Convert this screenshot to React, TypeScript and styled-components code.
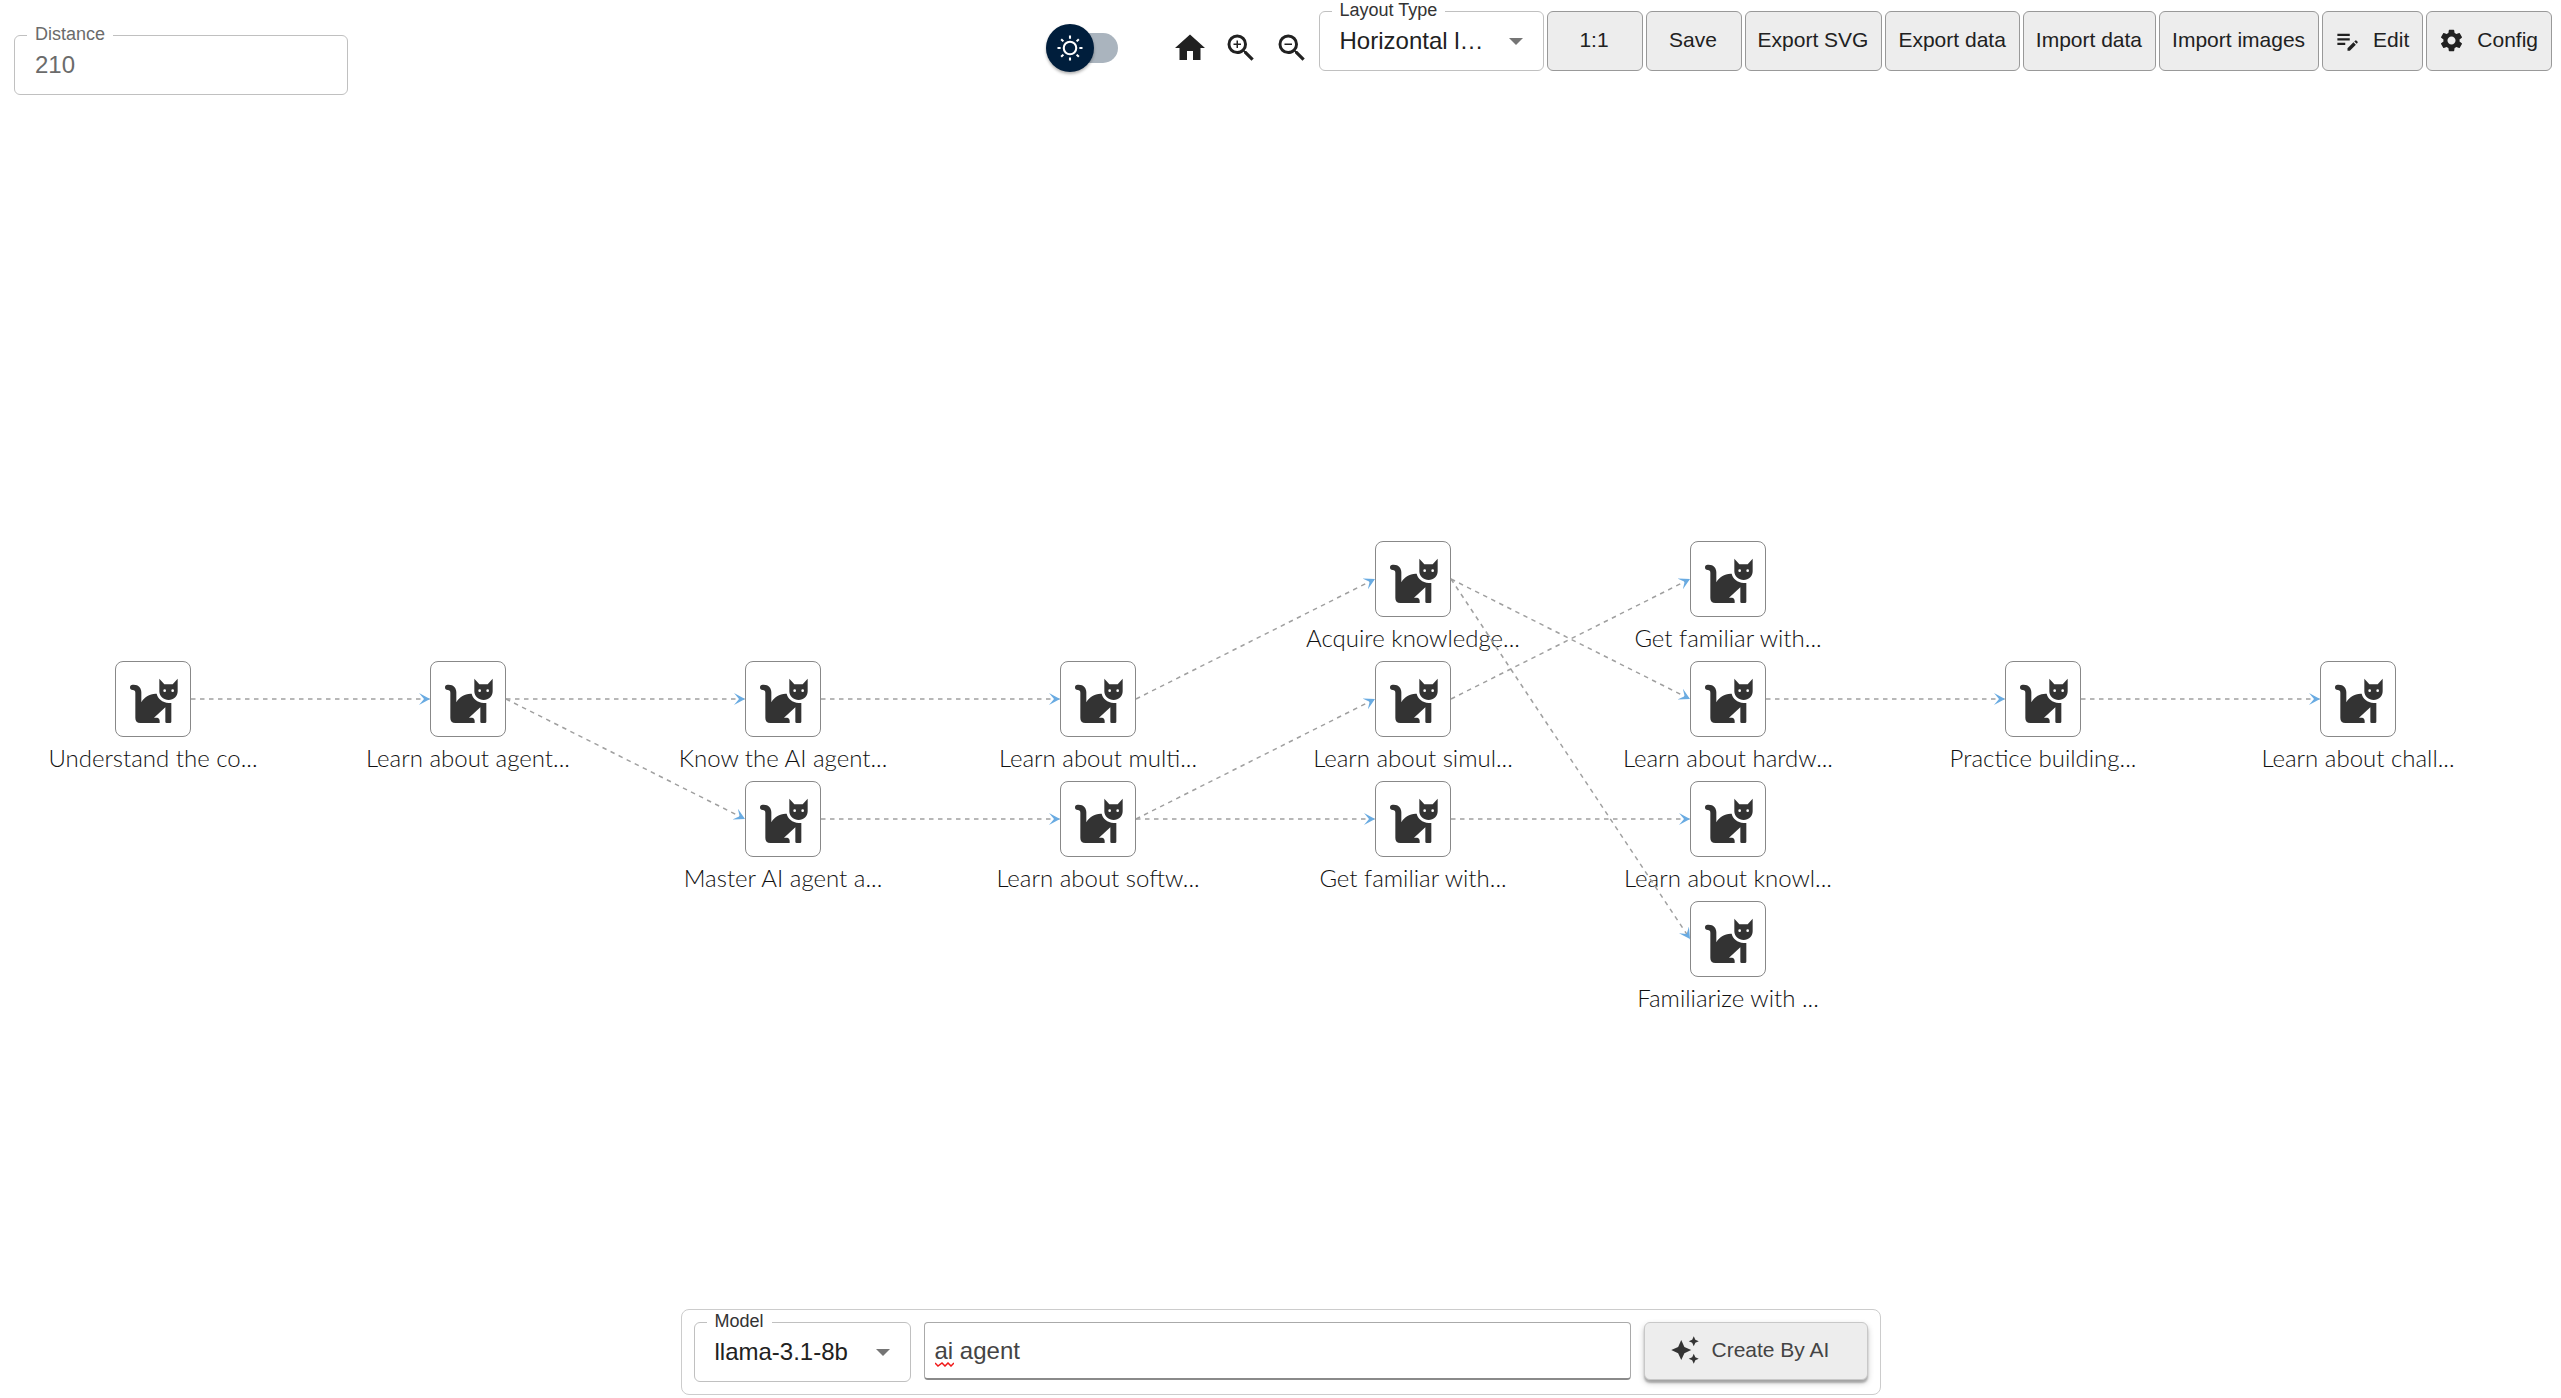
import React, { useState } from 'react';
import styled, { createGlobalStyle } from 'styled-components';
import {
  MdAutoAwesome,
  MdEditNote,
  MdHome,
  MdSettings,
  MdZoomIn,
  MdZoomOut,
} from 'react-icons/md';

const GlobalStyle = createGlobalStyle`
  *, *::before, *::after { box-sizing: border-box; }
  body {
    margin: 0;
    background: #fff;
    color: #212121;
    font-family: 'Liberation Sans', Arial, sans-serif;
  }
  button, input, select { font: inherit; color: inherit; }
`;

const Page = styled.div`
  display: flex;
  flex-direction: column;
  min-height: 100vh;
  overflow: hidden;
`;

const Header = styled.header`
  display: flex;
  justify-content: space-between;
  align-items: flex-start;
  padding: 11px 9px 0 14px;
`;

const DistanceSlot = styled.div`
  padding-top: 24px;
`;

const Toolbar = styled.div`
  display: flex;
  align-items: flex-start;
  gap: 3px;
`;

const ViewTools = styled.div`
  display: flex;
  align-items: center;
  gap: 15px;
  height: 48px;
  margin: 13px 6px 0 0;
`;

const Field = styled.div<{ $width: number }>`
  position: relative;
  flex: none;
  width: ${(p) => p.$width}px;
  height: 60px;
  border: 1px solid #c0c0c0;
  border-radius: 6px;
`;

const FieldLabel = styled.label<{ $muted?: boolean }>`
  position: absolute;
  top: -12px;
  left: 12px;
  padding: 0 8px;
  background: #fff;
  font-size: 18px;
  line-height: 20px;
  white-space: nowrap;
  color: ${(p) => (p.$muted ? '#6b6b6b' : '#333')};
`;

const FieldInput = styled.input`
  width: 100%;
  height: 100%;
  padding: 0 20px;
  border: 0;
  border-radius: 6px;
  outline: 0;
  background: transparent;
  font-size: 24px;
  color: #6b6b6b;
`;

const FieldSelect = styled.select`
  width: 100%;
  height: 100%;
  padding: 0 48px 2px 20px;
  border: 0;
  border-radius: 6px;
  outline: 0;
  appearance: none;
  background: transparent;
  font-size: 24px;
`;

const Caret = styled.svg`
  position: absolute;
  top: 26px;
  right: 20px;
  width: 14px;
  height: 7px;
  fill: #757575;
  pointer-events: none;
`;

const Switch = styled.label`
  position: relative;
  display: block;
  width: 72px;
  height: 30px;
  margin-right: 39px;
  border-radius: 15px;
  background: #aab4be;
  cursor: pointer;
`;

const SwitchInput = styled.input`
  position: absolute;
  inset: 0;
  width: 100%;
  height: 100%;
  margin: 0;
  opacity: 0;
  cursor: pointer;
`;

const Thumb = styled.span<{ $on: boolean }>`
  position: absolute;
  top: -9px;
  left: ${(p) => (p.$on ? 24 : 0)}px;
  display: grid;
  place-items: center;
  width: 48px;
  height: 48px;
  border-radius: 50%;
  background: #001e3c;
  box-shadow: 0 2px 3px rgba(0, 0, 0, 0.3);
  pointer-events: none;
`;

const IconButton = styled.button`
  display: block;
  padding: 0;
  border: 0;
  background: none;
  font-size: 36px;
  line-height: 0;
  cursor: pointer;
`;

const ToolButton = styled.button`
  display: flex;
  align-items: center;
  justify-content: center;
  gap: 12px;
  min-width: 96px;
  height: 60px;
  padding: 0 13px 2px 12px;
  border: 1px solid #999;
  border-radius: 6px;
  background: #ededed;
  font-size: 21px;
  white-space: nowrap;
  cursor: pointer;

  svg {
    margin-left: -1px;
    font-size: 27px;
  }
`;

const Canvas = styled.main`
  position: relative;
  flex: 1;
`;

const Edges = styled.svg`
  position: absolute;
  inset: 0;
  width: 100%;
  height: 100%;
  overflow: visible;
`;

const Node = styled.div<{ $x: number; $y: number }>`
  position: absolute;
  left: ${(p) => p.$x - 150}px;
  top: ${(p) => p.$y - 38}px;
  width: 300px;
  display: flex;
  flex-direction: column;
  align-items: center;
  gap: 6px;
`;

const NodeBox = styled.div`
  display: grid;
  place-items: center;
  width: 76px;
  height: 76px;
  padding: 4px 0 0 2px;
  border: 1px solid #888;
  border-radius: 8px;
  background: #fff;
`;

const NodeLabel = styled.span`
  font-family: Lato, 'Open Sans', sans-serif;
  font-weight: 300;
  font-size: 24px;
  line-height: 30px;
  white-space: nowrap;
  color: #111;
`;

const PromptBar = styled.form`
  display: flex;
  align-items: flex-start;
  gap: 13px;
  width: 1200px;
  max-width: 100%;
  margin: 0 auto 3px;
  padding: 12px;
  border: 1px solid #ccc;
  border-radius: 8px;
`;

const PromptBox = styled.div`
  position: relative;
  flex: 1;
`;

const PromptInput = styled.input`
  display: block;
  width: 100%;
  height: 58px;
  padding: 0 10px;
  border: 1px solid #aaa;
  border-bottom: 2px solid #8a8a8a;
  border-radius: 4px;
  outline: 0;
  background: #fff;
  font-size: 24px;
  color: #444;
`;

const Squiggle = styled.svg`
  position: absolute;
  left: 11px;
  bottom: 13px;
  width: 19px;
  height: 5px;
  fill: none;
  stroke: #f01818;
  stroke-width: 1.5;
  pointer-events: none;
`;

const CreateButton = styled.button`
  display: flex;
  align-items: center;
  gap: 12px;
  min-width: 224px;
  height: 58px;
  padding: 0 25px 2px;
  border: 1px solid #c8c8c8;
  border-radius: 6px;
  background: #ededed;
  box-shadow: 0 3px 2px rgba(0, 0, 0, 0.24), 0 3px 6px rgba(0, 0, 0, 0.2);
  font-size: 21px;
  white-space: nowrap;
  color: #444;
  cursor: pointer;

  svg {
    font-size: 30px;
    color: #333;
  }
`;

const COLUMN_GAP = 315;
const ROW_GAP = 120;
const HALF = 38;
const nodeX = (col: number) => 153 + col * COLUMN_GAP;
const nodeY = (row: number) => 484 + row * ROW_GAP;

type GraphNode = { id: string; col: number; row: number; label: string };

const NODES: GraphNode[] = [
  { id: 'concept', col: 0, row: 1, label: 'Understand the co...' },
  { id: 'agents', col: 1, row: 1, label: 'Learn about agent...' },
  { id: 'know', col: 2, row: 1, label: 'Know the AI agent...' },
  { id: 'master', col: 2, row: 2, label: 'Master AI agent a...' },
  { id: 'multi', col: 3, row: 1, label: 'Learn about multi...' },
  { id: 'software', col: 3, row: 2, label: 'Learn about softw...' },
  { id: 'acquire', col: 4, row: 0, label: 'Acquire knowledge...' },
  { id: 'simulation', col: 4, row: 1, label: 'Learn about simul...' },
  { id: 'familiar', col: 4, row: 2, label: 'Get familiar with...' },
  { id: 'familiarTop', col: 5, row: 0, label: 'Get familiar with...' },
  { id: 'hardware', col: 5, row: 1, label: 'Learn about hardw...' },
  { id: 'knowledge', col: 5, row: 2, label: 'Learn about knowl...' },
  { id: 'familiarize', col: 5, row: 3, label: 'Familiarize with ...' },
  { id: 'practice', col: 6, row: 1, label: 'Practice building...' },
  { id: 'challenges', col: 7, row: 1, label: 'Learn about chall...' },
];

const EDGES: [string, string][] = [
  ['concept', 'agents'],
  ['agents', 'know'],
  ['agents', 'master'],
  ['know', 'multi'],
  ['master', 'software'],
  ['multi', 'acquire'],
  ['software', 'simulation'],
  ['software', 'familiar'],
  ['acquire', 'hardware'],
  ['acquire', 'familiarize'],
  ['simulation', 'familiarTop'],
  ['familiar', 'knowledge'],
  ['hardware', 'practice'],
  ['practice', 'challenges'],
];

const byId = new Map(NODES.map((n) => [n.id, n]));

const CatIcon = () => (
  <svg width="48" height="48" viewBox="90 81 144 144" fill="#333" aria-hidden="true">
    <path d="M98 104h3c15 0 23 10 23 23v30c8-15 24-26 43-26h3c3 15 17 26 36 28h8v56q0 4-4 4h-10q-4 0-4-4v-43l-34 31h10q7 2 7 9v7h-58q-15 0-15-15v-76q0-8-8-8a8 8 0 0 1 0-16z" />
    <path
      fillRule="evenodd"
      d="M178 86l15 17h25l15-17v38c0 15-12 26-27 26s-28-11-28-26zM194 118a4 4 0 1 0 0 8 4 4 0 0 0 0-8zM218 118a4 4 0 1 0 0 8 4 4 0 0 0 0-8z"
    />
  </svg>
);

const SunIcon = () => (
  <svg width="30" height="30" viewBox="0 0 20 20" fill="#fff" aria-hidden="true">
    <path d="M9.305 1.667V3.75h1.389V1.667h-1.39zm-4.707 1.95l-.982.982L5.09 6.072l.982-.982-1.473-1.473zm10.802 0L13.927 5.09l.982.982 1.473-1.473-.982-.982zM10 5.139a4.872 4.872 0 00-4.862 4.86A4.872 4.872 0 0010 14.862 4.872 4.872 0 0014.86 10 4.872 4.872 0 0010 5.139zm0 1.389A3.462 3.462 0 0113.471 10a3.462 3.462 0 01-3.473 3.472A3.462 3.462 0 016.527 10 3.462 3.462 0 0110 6.528zM1.665 9.305v1.39h2.083v-1.39H1.666zm14.583 0v1.39h2.084v-1.39h-2.084zM5.09 13.928L3.616 15.4l.982.982 1.473-1.473-.982-.982zm9.82 0l-.982.982 1.473 1.473.982-.982-1.473-1.473zM9.305 16.25v2.083h1.389V16.25h-1.39z" />
  </svg>
);

const CaretIcon = () => (
  <Caret viewBox="0 0 14 7" aria-hidden="true">
    <path d="M0 0h14L7 7z" />
  </Caret>
);

const Graph = () => (
  <Canvas>
    {NODES.map((n) => (
      <Node key={n.id} $x={nodeX(n.col)} $y={nodeY(n.row)}>
        <NodeBox>
          <CatIcon />
        </NodeBox>
        <NodeLabel>{n.label}</NodeLabel>
      </Node>
    ))}
    <Edges aria-hidden="true">
      <defs>
        <marker
          id="arrow"
          markerUnits="userSpaceOnUse"
          markerWidth="12"
          markerHeight="12"
          refX="11"
          refY="6"
          orient="auto"
        >
          <path d="M0 0l11 6-11 6 5-6z" fill="#69abe2" />
        </marker>
      </defs>
      {EDGES.map(([from, to]) => {
        const a = byId.get(from)!;
        const b = byId.get(to)!;
        return (
          <line
            key={`${from}-${to}`}
            x1={nodeX(a.col) + HALF}
            y1={nodeY(a.row)}
            x2={nodeX(b.col) - HALF}
            y2={nodeY(b.row)}
            stroke="#a0a0a0"
            strokeWidth="1.5"
            strokeDasharray="4.5 4.5"
            markerEnd="url(#arrow)"
          />
        );
      })}
    </Edges>
  </Canvas>
);

export default function App() {
  const [dark, setDark] = useState(false);
  const [distance, setDistance] = useState('210');
  const [prompt, setPrompt] = useState('ai agent');

  return (
    <Page>
      <GlobalStyle />
      <Header>
        <DistanceSlot>
          <Field $width={334}>
            <FieldLabel htmlFor="distance" $muted>
              Distance
            </FieldLabel>
            <FieldInput
              id="distance"
              value={distance}
              onChange={(e) => setDistance(e.target.value)}
            />
          </Field>
        </DistanceSlot>
        <Toolbar>
          <ViewTools>
            <Switch>
              <SwitchInput
                type="checkbox"
                aria-label="Dark theme"
                checked={dark}
                onChange={(e) => setDark(e.target.checked)}
              />
              <Thumb $on={dark}>
                <SunIcon />
              </Thumb>
            </Switch>
            <IconButton type="button" aria-label="Home">
              <MdHome />
            </IconButton>
            <IconButton type="button" aria-label="Zoom in">
              <MdZoomIn />
            </IconButton>
            <IconButton type="button" aria-label="Zoom out">
              <MdZoomOut />
            </IconButton>
          </ViewTools>
          <Field $width={225}>
            <FieldLabel htmlFor="layout">Layout Type</FieldLabel>
            <FieldSelect id="layout">
              <option>Horizontal l…</option>
            </FieldSelect>
            <CaretIcon />
          </Field>
          <ToolButton type="button">1:1</ToolButton>
          <ToolButton type="button">Save</ToolButton>
          <ToolButton type="button">Export SVG</ToolButton>
          <ToolButton type="button">Export data</ToolButton>
          <ToolButton type="button">Import data</ToolButton>
          <ToolButton type="button">Import images</ToolButton>
          <ToolButton type="button">
            <MdEditNote />
            Edit
          </ToolButton>
          <ToolButton type="button">
            <MdSettings />
            Config
          </ToolButton>
        </Toolbar>
      </Header>
      <Graph />
      <PromptBar onSubmit={(e) => e.preventDefault()}>
        <Field $width={217}>
          <FieldLabel htmlFor="model">Model</FieldLabel>
          <FieldSelect id="model">
            <option>llama-3.1-8b</option>
          </FieldSelect>
          <CaretIcon />
        </Field>
        <PromptBox>
          <PromptInput
            aria-label="Prompt"
            spellCheck={false}
            value={prompt}
            onChange={(e) => setPrompt(e.target.value)}
          />
          <Squiggle viewBox="0 0 19 5" aria-hidden="true">
            <path d="M0 1l3 3 4-3 3 3 3-3 3 3 3-3" />
          </Squiggle>
        </PromptBox>
        <CreateButton type="submit">
          <MdAutoAwesome />
          Create By AI
        </CreateButton>
      </PromptBar>
    </Page>
  );
}
